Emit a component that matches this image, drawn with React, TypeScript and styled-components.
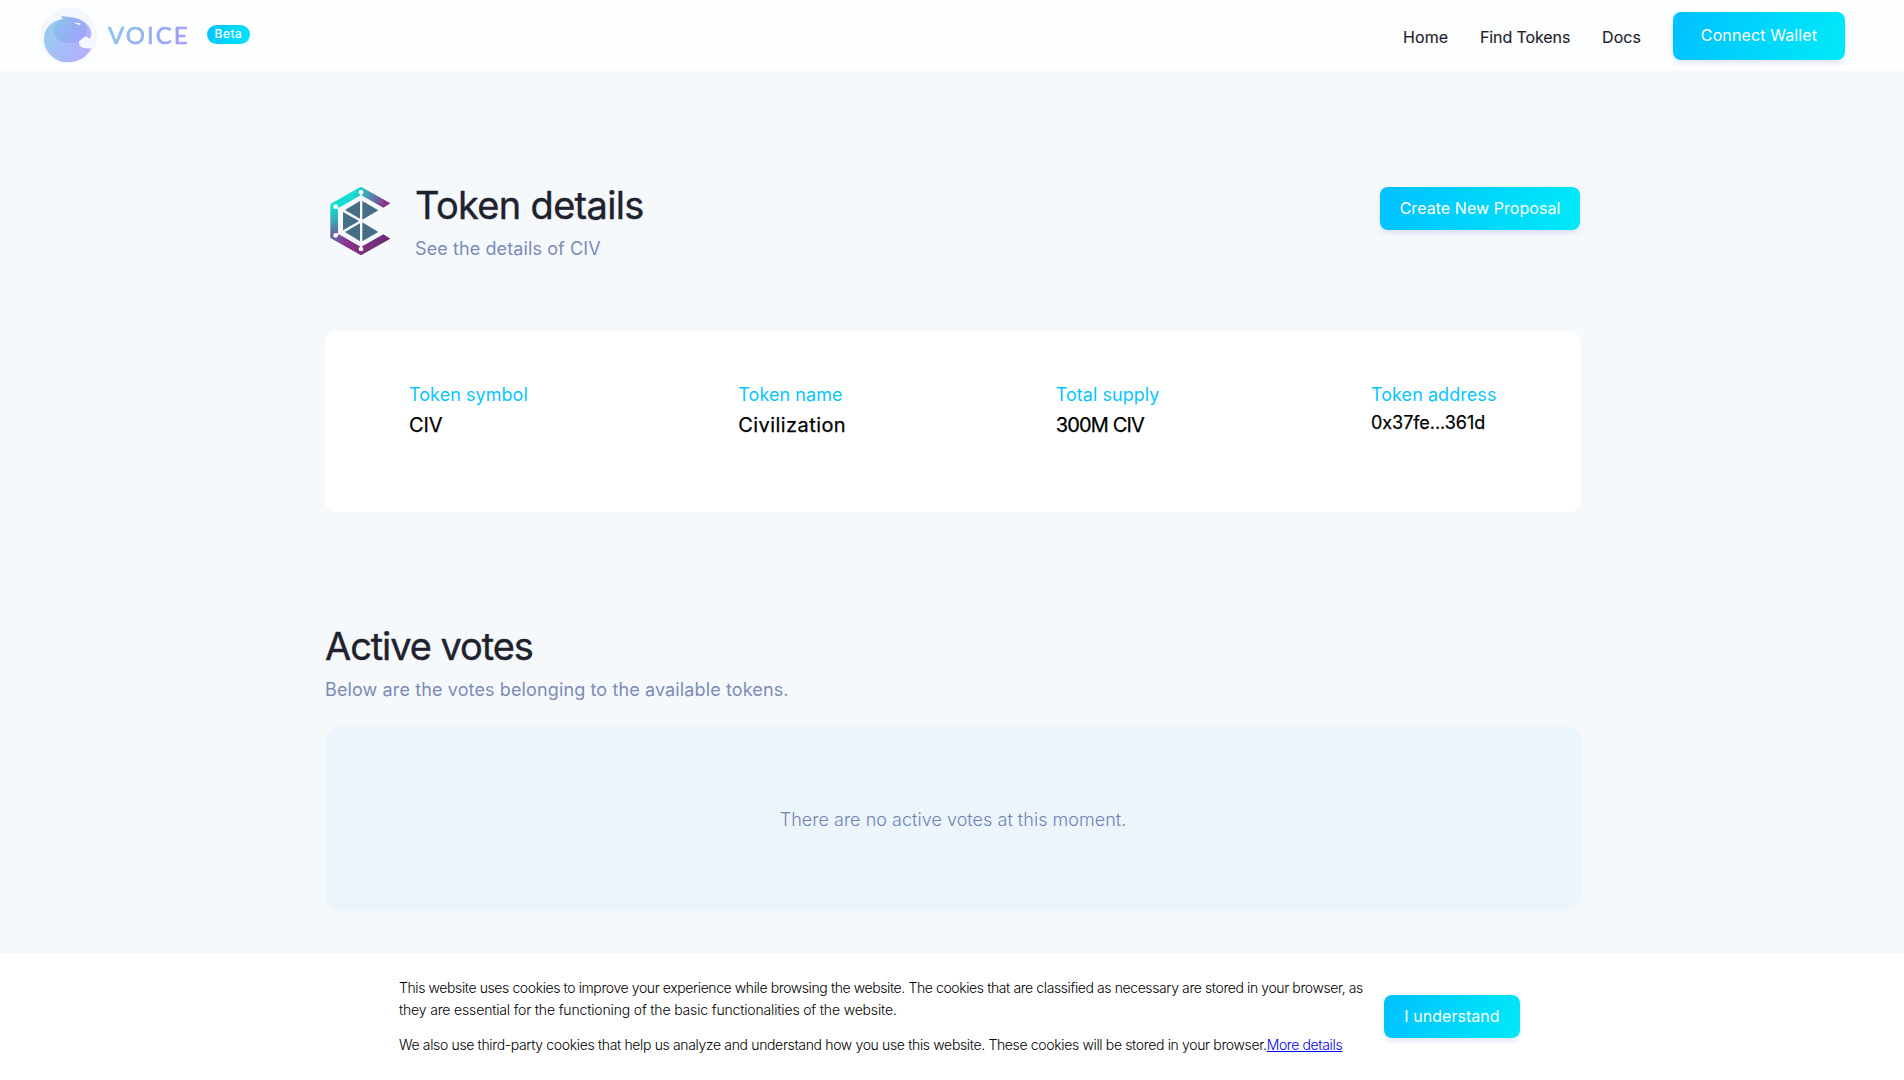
import React from "react";
import styled, { createGlobalStyle } from "styled-components";

const GlobalStyle = createGlobalStyle`
  * { box-sizing: border-box; }
  body {
    margin: 0;
    background: #f5f9fc;
    font-family: Inter, "Liberation Sans", sans-serif;
    color: #1f222e;
  }
`;

const Page = styled.div`
  display: flex;
  flex-direction: column;
  height: 100vh;
  overflow: hidden;
`;

const Header = styled.header`
  display: flex;
  justify-content: space-between;
  height: 71px;
  flex: none;
  padding: 0 59px 0 40px;
  background: #fdfeff;
`;

const Brand = styled.div`
  display: flex;
  align-items: flex-start;
`;

const LogoMark = styled.svg`
  display: block;
  width: 58px;
  height: 56px;
  margin-top: 7px;
`;

const Wordmark = styled.span`
  width: 84px;
  margin: 20px 0 0 10px;
  font-family: Lato, Inter, sans-serif;
  font-size: 24px;
  line-height: 29px;
  font-weight: 400;
  letter-spacing: 2px;
  background: linear-gradient(100deg, #89c2ea 5%, #a09afb 90%);
  background-clip: text;
  -webkit-background-clip: text;
  -webkit-text-stroke: 0.7px transparent;
  color: transparent;
`;

const Badge = styled.span`
  display: flex;
  justify-content: center;
  width: 43px;
  height: 19px;
  margin: 25px 0 0 15px;
  border-radius: 10px;
  background: linear-gradient(120deg, #00c2ff, #00e6fa);
  color: #fff;
  font-size: 12px;
  line-height: 18px;
  font-weight: 500;
  letter-spacing: 0.5px;
`;

const Nav = styled.nav`
  display: flex;
  align-items: flex-start;
  gap: 32px;
  padding-top: 12px;
`;

const NavLink = styled.a<{ $width: number; $tracking: number }>`
  width: ${(p) => p.$width}px;
  margin-top: 13px;
  font-size: 16px;
  line-height: 24px;
  letter-spacing: ${(p) => p.$tracking}px;
  -webkit-text-stroke: 0.15px currentColor;
  white-space: nowrap;
`;

const Button = styled.button<{ $width: number; $height: number; $tracking?: number }>`
  flex: none;
  width: ${(p) => p.$width}px;
  height: ${(p) => p.$height}px;
  padding: 0 0 2px;
  border: 0;
  border-radius: 8px;
  background: linear-gradient(110deg, #00c2ff 5%, #00e8f8 95%);
  box-shadow: 0 3px 5px rgba(60, 80, 200, 0.14);
  color: #fff;
  font: 400 16px/24px Inter, sans-serif;
  letter-spacing: ${(p) => p.$tracking ?? 0.05}px;
  white-space: nowrap;
`;

const Main = styled.main`
  flex: 1;
  width: 1256px;
  margin-left: 325px;
  padding-top: 111px;
`;

const TokenHead = styled.section`
  display: flex;
  align-items: flex-start;
  height: 149px;
`;

const TokenLogo = styled.svg`
  width: 61px;
  height: 70px;
  margin: 4px 24px 0 5px;
`;

const HeadText = styled.div`
  flex: 1;
`;

const Title = styled.h1<{ $tracking: number }>`
  margin: 0;
  font-size: 38px;
  line-height: 46px;
  font-weight: 400;
  letter-spacing: ${(p) => p.$tracking}px;
  -webkit-text-stroke: 0.4px currentColor;
`;

const Subtitle = styled.p<{ $tracking: number }>`
  margin: 8px 0 0;
  font-size: 18px;
  line-height: 25px;
  font-weight: 400;
  letter-spacing: ${(p) => p.$tracking}px;
  color: #7b8bb8;
`;

const HeadAction = styled.div`
  padding: 5px 1px 0 0;
`;

const DetailsCard = styled.section`
  display: flex;
  justify-content: space-between;
  height: 181px;
  padding: 51px 84px 0;
  border-radius: 12px;
  background: #fff;
`;

const Detail = styled.div<{ $width: number }>`
  width: ${(p) => p.$width}px;
  white-space: nowrap;
`;

const DetailLabel = styled.div`
  font-size: 18px;
  line-height: 26px;
  font-weight: 400;
  letter-spacing: 0.05px;
  color: #0ac5ff;
`;

const DetailValue = styled.div<{ $compact?: boolean; $tracking: number }>`
  margin-top: ${(p) => (p.$compact ? 1 : 3)}px;
  font-size: ${(p) => (p.$compact ? 18 : 20)}px;
  line-height: 28px;
  font-weight: 400;
  letter-spacing: ${(p) => p.$tracking}px;
  -webkit-text-stroke: 0.25px currentColor;
  color: #000;
`;

const Votes = styled.section`
  padding-top: 111px;
`;

const EmptyState = styled.div`
  display: flex;
  align-items: center;
  justify-content: center;
  height: 184px;
  margin-top: 25px;
  border-radius: 14px;
  background: #ecf4fc;
  color: #7183b2;
  font-size: 18px;
  font-weight: 300;
  letter-spacing: 0.03px;
`;

const CookieBar = styled.aside`
  display: flex;
  flex: none;
  height: 127px;
  padding: 24px 0 0 399px;
  background: #fff;
`;

const CookieText = styled.div`
  width: 985px;
  color: #000;
  font-size: 14px;
  line-height: 22px;
  font-weight: 300;
  white-space: nowrap;
`;

const CookieParagraph = styled.p`
  margin: 0 0 13px;
`;

const Line = styled.span<{ $tracking: number }>`
  display: block;
  letter-spacing: ${(p) => p.$tracking}px;
`;

const MoreLink = styled.a`
  color: #0000ee;
  letter-spacing: -0.37px;
  text-decoration: underline;
`;

const CookieAction = styled.div`
  padding-top: 18px;
`;

function VoiceLogo() {
  return (
    <LogoMark viewBox="30 20 174 168" aria-hidden="true">
      <defs>
        <linearGradient id="wave" x1="0" y1="0.3" x2="1" y2="0.8">
          <stop offset="0" stopColor="#98cdee" />
          <stop offset="1" stopColor="#b6acff" />
        </linearGradient>
        <linearGradient id="head" x1="0" y1="0.2" x2="1" y2="0.7">
          <stop offset="0" stopColor="#86c4ea" />
          <stop offset="1" stopColor="#a3a1fa" />
        </linearGradient>
      </defs>
      <circle cx="116" cy="106" r="85" fill="#f5f7ff" />
      <path
        d="M94 48C112 50 137 51 153 60C170 67 183 82 184 98C184 106 181 113 177 117C176 110 170 108 163 110C151 111 146 119 147 128C148 140 159 146 184 144C172 170 144 186 115 186C74 186 42 155 42 115C42 83 66 60 99 56Z"
        fill="url(#wave)"
      />
      <path
        d="M94 48C112 50 137 51 153 60C163 66 169 77 169 89C169 112 146 129 119 129C90 129 71 113 71 93C71 75 82 62 99 56Z"
        fill="url(#head)"
      />
      <path d="M130 66C138 70 146 74 151 75C151 72 149 70 153 68C146 69 138 68 130 66Z" fill="#fff" />
    </LogoMark>
  );
}

function CivLogo() {
  return (
    <TokenLogo viewBox="30 20 183 210" aria-hidden="true">
      <defs>
        <linearGradient id="upper" gradientUnits="userSpaceOnUse" x1="100" y1="50" x2="190" y2="88">
          <stop offset="0" stopColor="#15ded0" />
          <stop offset="0.35" stopColor="#3fa5b8" />
          <stop offset="1" stopColor="#8b3189" />
        </linearGradient>
        <linearGradient id="side" gradientUnits="userSpaceOnUse" x1="40" y1="85" x2="60" y2="180">
          <stop offset="0" stopColor="#15ded0" />
          <stop offset="0.45" stopColor="#3f9fb9" />
          <stop offset="1" stopColor="#85398f" />
        </linearGradient>
        <linearGradient id="lower" gradientUnits="userSpaceOnUse" x1="31" y1="170" x2="200" y2="190">
          <stop offset="0" stopColor="#5878aa" />
          <stop offset="0.3" stopColor="#8c328c" />
          <stop offset="1" stopColor="#692b70" />
        </linearGradient>
      </defs>
      <path d="M31 74L123 22L211 72L190 85L123 47L54 87Z" fill="url(#upper)" />
      <path d="M31 74L54 87V163L31 176Z" fill="url(#side)" />
      <path d="M31 176L54 163L123 203L190 165L211 178L123 228Z" fill="url(#lower)" />
      <path
        d="M127 65L175 93L127 121ZM120 65V118L75 92ZM69 98L117 125L69 153ZM120 132V186L75 158ZM127 129L175 158L127 186Z"
        fill="#446e87"
      />
      <path d="M123 40V52M123 198V209M47 82L57 88M47 168L57 162" stroke="#f5f9fc" strokeWidth="5" />
      <g fill="#fff">
        <circle cx="123" cy="39" r="7" />
        <circle cx="47" cy="82" r="7" />
        <circle cx="47" cy="168" r="7" />
        <circle cx="123" cy="209" r="7" />
      </g>
    </TokenLogo>
  );
}

const details = [
  { label: "Token symbol", value: "CIV", width: 119, tracking: -0.1 },
  { label: "Token name", value: "Civilization", width: 107, tracking: 0.42 },
  { label: "Total supply", value: "300M CIV", width: 105, tracking: -0.85 },
  { label: "Token address", value: "0x37fe...361d", width: 126, tracking: -0.05, compact: true },
];

export default function App() {
  return (
    <Page>
      <GlobalStyle />
      <Header>
        <Brand>
          <VoiceLogo />
          <Wordmark>VOICE</Wordmark>
          <Badge>Beta</Badge>
        </Brand>
        <Nav>
          <NavLink $width={45} $tracking={0.1}>Home</NavLink>
          <NavLink $width={90} $tracking={-0.1}>Find Tokens</NavLink>
          <NavLink $width={39} $tracking={0.1}>Docs</NavLink>
          <Button $width={172} $height={48} $tracking={0.12}>Connect Wallet</Button>
        </Nav>
      </Header>
      <Main>
        <TokenHead>
          <CivLogo />
          <HeadText>
            <Title $tracking={-0.68}>Token details</Title>
            <Subtitle $tracking={0.1}>See the details of CIV</Subtitle>
          </HeadText>
          <HeadAction>
            <Button $width={200} $height={43}>Create New Proposal</Button>
          </HeadAction>
        </TokenHead>
        <DetailsCard>
          {details.map((d) => (
            <Detail key={d.label} $width={d.width}>
              <DetailLabel>{d.label}</DetailLabel>
              <DetailValue $compact={d.compact} $tracking={d.tracking}>{d.value}</DetailValue>
            </Detail>
          ))}
        </DetailsCard>
        <Votes>
          <Title as="h2" $tracking={-1.08}>Active votes</Title>
          <Subtitle $tracking={0.12}>Below are the votes belonging to the available tokens.</Subtitle>
          <EmptyState>There are no active votes at this moment.</EmptyState>
        </Votes>
      </Main>
      <CookieBar>
        <CookieText>
          <CookieParagraph>
            <Line $tracking={-0.4}>
              This website uses cookies to improve your experience while browsing the website. The cookies that are classified as necessary are stored in your browser, as
            </Line>
            <Line $tracking={-0.16}>they are essential for the functioning of the basic functionalities of the website.</Line>
          </CookieParagraph>
          <CookieParagraph>
            <Line $tracking={-0.35}>
              We also use third-party cookies that help us analyze and understand how you use this website. These cookies will be stored in your browser.
              <MoreLink>More details</MoreLink>
            </Line>
          </CookieParagraph>
        </CookieText>
        <CookieAction>
          <Button $width={136} $height={43}>I understand</Button>
        </CookieAction>
      </CookieBar>
    </Page>
  );
}
